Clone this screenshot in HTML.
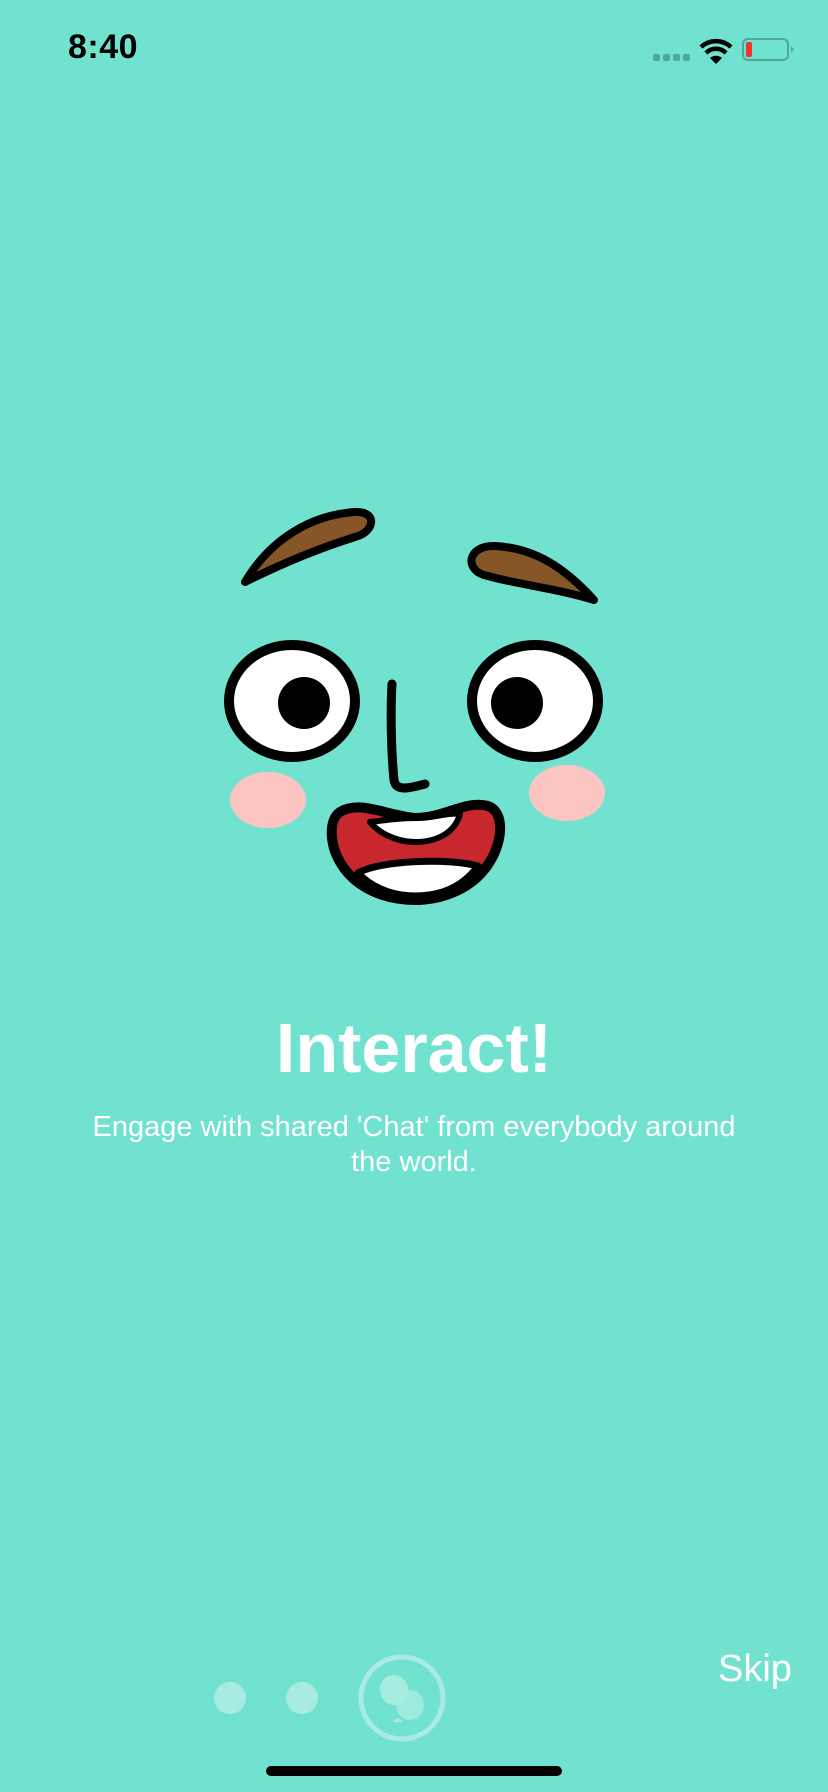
<!DOCTYPE html>
<html><head><meta charset="utf-8"><style>
html,body{margin:0;padding:0}
body{width:828px;height:1792px;background:#72E2D0;position:relative;overflow:hidden;font-family:"Liberation Sans",sans-serif;color:#fff}
.abs{position:absolute}
</style></head><body>
<div class="abs" style="left:68px;top:28px;font-size:34px;font-weight:bold;color:#000;letter-spacing:0.5px">8:40</div>
<svg class="abs" style="left:0;top:0" width="828" height="80">
<g fill="#4fa89a"><rect x="653" y="54" width="7" height="7" rx="2"/><rect x="663" y="54" width="7" height="7" rx="2"/><rect x="673" y="54" width="7" height="7" rx="2"/><rect x="683" y="54" width="7" height="7" rx="2"/></g>
<g fill="none" stroke="#000" stroke-width="4.5" stroke-linecap="butt">
<path d="M701 47 A22 22 0 0 1 731 47"/><path d="M706 53 A14 14 0 0 1 726 53"/></g>
<path d="M710 58 L716 64 L722 58 A9 9 0 0 0 710 58Z" fill="#000"/>
<rect x="743" y="39" width="45" height="21" rx="5" fill="none" stroke="#4fa89a" stroke-width="2"/>
<rect x="746" y="42" width="6" height="15" rx="2" fill="#f0352c"/>
<path d="M791 46 L794 49 L791 53Z" fill="#4fa89a"/>
</svg>
<svg class="abs" style="left:0;top:0" width="828" height="1000">
<g stroke="#000" stroke-width="8" stroke-linejoin="round">
<path d="M245 582 C270 540 310 515 355 512 C378 511 375 532 355 537 C320 548 285 562 245 582Z" fill="#875626"/>
<path d="M594 600 C565 568 535 548 495 546 C466 545 464 572 488 576 C515 584 555 588 594 600Z" fill="#875626"/>
</g>
<g stroke="#000" stroke-width="10">
<ellipse cx="292" cy="701" rx="63" ry="56" fill="#fff"/>
<ellipse cx="535" cy="701" rx="63" ry="56" fill="#fff"/>
</g>
<circle cx="304" cy="703" r="26" fill="#000"/>
<circle cx="517" cy="703" r="26" fill="#000"/>
<path d="M392 684 C390 720 392 760 394 780 C396 792 410 788 425 784" fill="none" stroke="#000" stroke-width="9" stroke-linecap="round"/>
<ellipse cx="268" cy="800" rx="38" ry="28" fill="#fcc5c1"/>
<ellipse cx="567" cy="793" rx="38" ry="28" fill="#fcc5c1"/>
<path d="M340 812 C360 800 385 815 415 818 C445 818 465 800 488 806 C505 812 502 840 492 858 C475 890 440 900 415 900 C385 900 355 888 340 862 C330 845 328 820 340 812Z" fill="#c8282d" stroke="#000" stroke-width="10"/>
<path d="M370 822 C385 820 400 818 418 818 C435 818 448 812 460 814 C455 832 438 842 415 842 C395 842 378 832 370 822Z" fill="#fff" stroke="#000" stroke-width="6" stroke-linejoin="round"/>
<path d="M358 873 C380 860 450 858 478 866 C462 888 440 896 415 896 C390 896 370 886 358 873Z" fill="#fff" stroke="#000" stroke-width="7" stroke-linejoin="round"/>
</svg>
<div class="abs" style="left:0;width:828px;top:1008px;text-align:center;font-size:70px;font-weight:bold">Interact!</div>
<div class="abs" style="left:89px;width:650px;top:1110px;text-align:center;font-size:29px;line-height:35px">Engage with shared 'Chat' from everybody around the world.</div>
<svg class="abs" style="left:0;top:1640px" width="828" height="152">
<circle cx="230" cy="58" r="16" fill="#a8ece1"/>
<circle cx="302" cy="58" r="16" fill="#a8ece1"/>
<circle cx="402" cy="58" r="41" fill="none" stroke="#a8ece1" stroke-width="5"/>
<ellipse cx="410" cy="65" rx="14" ry="15" fill="#a8ece1" opacity="0.8"/>
<ellipse cx="394" cy="50" rx="14" ry="15" fill="#a8ece1"/>
<path d="M398 78 L392 82 L404 82Z" fill="#a8ece1"/>
<rect x="266" y="126" width="296" height="10" rx="5" fill="#000"/>
</svg>
<div class="abs" style="left:718px;top:1648px;font-size:38px">Skip</div>
</body></html>
